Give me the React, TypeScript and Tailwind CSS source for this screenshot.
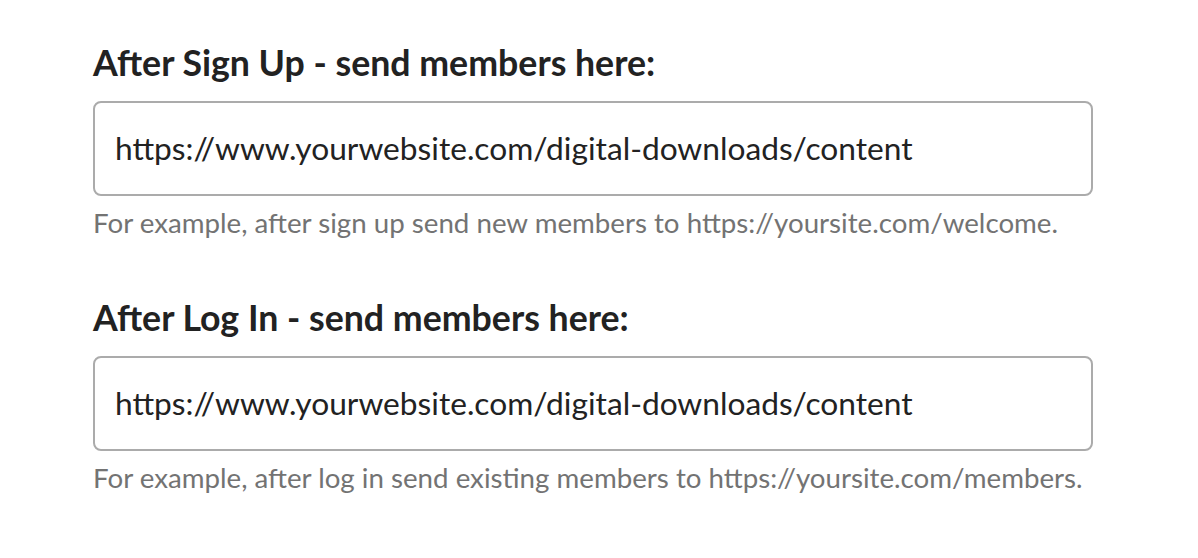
export default function App() {
  const fields = [
    {
      label: "After Sign Up - send members here:",
      value: "https://www.yourwebsite.com/digital-downloads/content",
      help: "For example, after sign up send new members to https://yoursite.com/welcome.",
    },
    {
      label: "After Log In - send members here:",
      value: "https://www.yourwebsite.com/digital-downloads/content",
      help: "For example, after log in send existing members to https://yoursite.com/members.",
    },
  ];
  return (
    <div className="min-h-screen bg-white pl-[93px] pt-[42px] font-['Lato',sans-serif]">
      <div className="w-[1000px] flex flex-col gap-[57px]">
        {fields.map((f) => (
          <div key={f.label} className="flex flex-col">
            <label className="text-[35.7px] leading-[42px] font-bold text-[#222]">
              {f.label}
            </label>
            <div className="mt-[17px] h-[95px] rounded-[8px] border-2 border-[#ababab] flex items-center px-[20px] text-[31.7px] text-[#222]">
              {f.value}
            </div>
            <p className="mt-[10px] text-[27.7px] leading-[34px] text-[#737373]">
              {f.help}
            </p>
          </div>
        ))}
      </div>
    </div>
  );
}
